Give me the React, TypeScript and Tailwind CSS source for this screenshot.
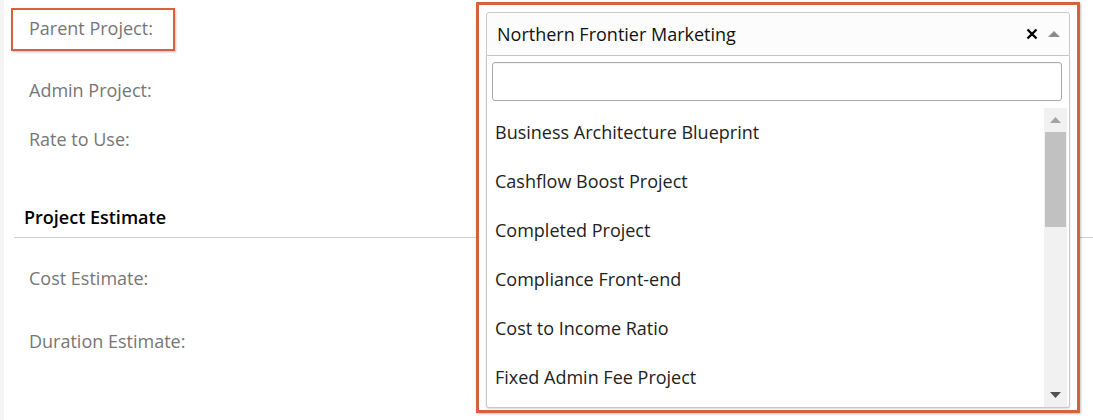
import React from "react";

const items = [
  "Business Architecture Blueprint",
  "Cashflow Boost Project",
  "Completed Project",
  "Compliance Front-end",
  "Cost to Income Ratio",
  "Fixed Admin Fee Project",
];

export default function App() {
  return (
    <div
      className="relative flex h-[420px] w-[1093px] overflow-hidden bg-white"
      style={{ fontFamily: '"Open Sans", "Noto Sans", sans-serif' }}
    >
      <div className="w-[4px] shrink-0 bg-[#f4f4f4]" />
      <div className="flex flex-1 flex-col text-[18px] text-[#767676]">
        <div className="h-[60px] pl-[7px] pt-[8px]">
          <div className="flex h-[43px] w-[164px] items-center border-2 border-[#d6613f] pb-[3px] pl-[16px] shadow-[1px_1px_2px_rgba(0,0,0,0.25)]">
            Parent Project:
          </div>
        </div>
        <div className="flex h-[60px] items-center pl-[25px]">Admin Project:</div>
        <div className="flex h-[38px] items-center pl-[25px]">Rate to Use:</div>
        <div className="h-[40px]" />
        <div className="ml-[10px] flex h-[40px] items-center border-b border-[#cfcfcf] pl-[10px] text-[18px] font-semibold text-black">
          Project Estimate
        </div>
        <div className="flex h-[80px] items-center pl-[25px]">Cost Estimate:</div>
        <div className="flex h-[46px] items-center pl-[25px]">Duration Estimate:</div>
      </div>

      {/* open select overlay with highlight */}
      <div className="absolute left-[476px] top-[2px] flex h-[411px] w-[604px] flex-col border-[3px] border-[#d6613f] bg-white px-[7px] pt-[7px] pb-[2px] shadow-[1px_1px_2px_rgba(0,0,0,0.25)]">
        <div className="flex h-[44px] shrink-0 items-center rounded-t-[3px] border border-[#c8c8c8] bg-[#fcfcfc] pl-[10px] pr-[9px] text-[18px] text-[#111]">
          <span className="flex-1">Northern Frontier Marketing</span>
          <svg width="12" height="12" viewBox="0 0 12 12" className="mr-[10px]">
            <path d="M1.5 1.5 L10.5 10.5 M10.5 1.5 L1.5 10.5" stroke="#000" strokeWidth="2.4" />
          </svg>
          <svg width="12" height="8" viewBox="0 0 12 8">
            <path d="M0 7 L6 1 L12 7 Z" fill="#8c8c8c" />
          </svg>
        </div>
        <div className="flex min-h-0 flex-1 flex-col rounded-b-[3px] border border-t-0 border-[#c8c8c8] bg-white shadow-[0_1px_2px_rgba(0,0,0,0.15)]">
          <div className="px-[5px] pr-[7px] pt-[6px]">
            <div className="h-[39px] rounded-[3px] border border-[#a9a9a9] bg-white shadow-[inset_0_1px_1px_rgba(0,0,0,0.05)]" />
          </div>
          <div className="mt-[7px] flex min-h-0 flex-1 pr-[2px]">
            <ul className="min-h-0 flex-1 overflow-hidden text-[18px] text-[#222]">
              {items.map((it) => (
                <li key={it} className="flex h-[49px] items-center pl-[8px]">
                  {it}
                </li>
              ))}
            </ul>
            <div className="flex w-[23px] flex-col items-center bg-[#f1f1f1]">
              <div className="flex h-[24px] w-full items-center justify-center">
                <svg width="11" height="6" viewBox="0 0 11 6">
                  <path d="M0 6 L5.5 0 L11 6 Z" fill="#a3a3a3" />
                </svg>
              </div>
              <div className="h-[95px] w-[21px] bg-[#c1c1c1]" />
              <div className="flex-1" />
              <div className="flex h-[24px] w-full items-center justify-center">
                <svg width="11" height="6" viewBox="0 0 11 6">
                  <path d="M0 0 L5.5 6 L11 0 Z" fill="#505050" />
                </svg>
              </div>
            </div>
          </div>
        </div>
      </div>
    </div>
  );
}
